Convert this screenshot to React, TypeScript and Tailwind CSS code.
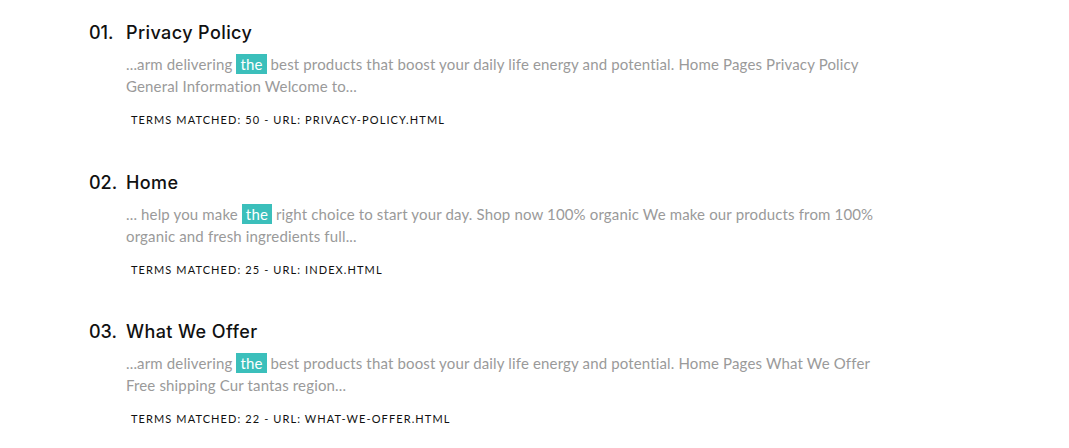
import React from 'react'

const results = [
  {
    no: '01.',
    title: 'Privacy Policy',
    before: '...arm delivering',
    after:
      'best products that boost your daily life energy and potential. Home Pages Privacy Policy General Information Welcome to...',
    terms: 50,
    url: 'PRIVACY-POLICY.HTML',
  },
  {
    no: '02.',
    title: 'Home',
    before: '... help you make',
    after:
      'right choice to start your day. Shop now 100% organic We make our products from 100% organic and fresh ingredients full...',
    terms: 25,
    url: 'INDEX.HTML',
  },
  {
    no: '03.',
    title: 'What We Offer',
    before: '...arm delivering',
    after:
      'best products that boost your daily life energy and potential. Home Pages What We Offer Free shipping Cur tantas region...',
    terms: 22,
    url: 'WHAT-WE-OFFER.HTML',
  },
]

function App() {
  return (
    <div className="w-[1069px] h-[448px] bg-white overflow-hidden pl-[89px] pt-[21px]">
      <ol className="flex flex-col gap-[43.5px]">
        {results.map((r) => (
          <li key={r.no} className="flex">
            <span
              className="w-[37px] text-[18px] leading-[24px] text-[#111] font-medium"
              style={{ fontFamily: 'Inter, "Open Sans", sans-serif' }}
            >
              {r.no}
            </span>
            <div className="flex flex-col">
              <h3
                className="text-[18px] leading-[24px] text-[#111] font-medium tracking-[0.4px]"
                style={{ fontFamily: 'Inter, "Open Sans", sans-serif' }}
              >
                {r.title}
              </h3>
              <p
                className="mt-[8px] w-[760px] text-[15px] leading-[22px] tracking-[0.15px] text-[#9a9a9a]"
                style={{ fontFamily: 'Lato, sans-serif' }}
              >
                {r.before}{' '}
                <span className="bg-[#3bbfbb] text-white px-[4px] py-[1px]">the</span>{' '}
                {r.after}
              </p>
              <p
                className="mt-[16px] pl-[5px] text-[11px] leading-[14px] tracking-[1.1px] uppercase text-[#111]"
                style={{ fontFamily: 'Lato, sans-serif' }}
              >
                Terms matched: {r.terms} - URL: {r.url}
              </p>
            </div>
          </li>
        ))}
      </ol>
    </div>
  )
}

export default App
